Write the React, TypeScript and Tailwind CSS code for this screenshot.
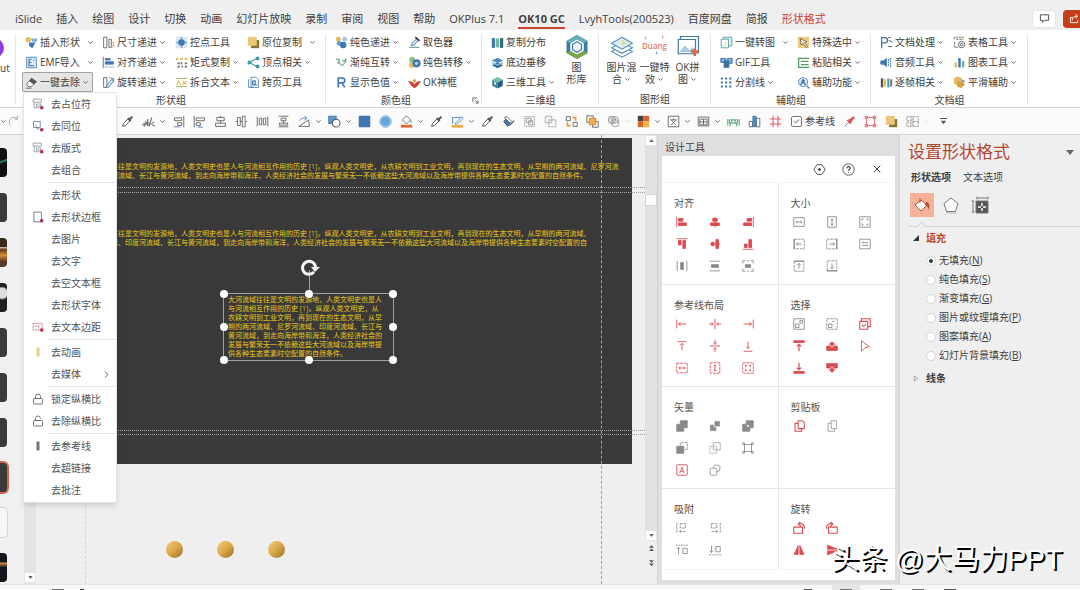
import { useState } from "react";
import type { ReactNode } from "react";
import clsx from "clsx";
import { Check, ChevronDown, ChevronRight, Lock, LockOpen, X } from "lucide-react";

const BLUE = "#3f78b0";
const TEAL = "#3f9aa8";
const GOLD = "#e3b95c";
const RED = "#dd4a4f";
const GRAY = "#8a8a8a";
const INK = "#555555";

const glyphs: Record<string, ReactNode> = {
  // ribbon
  insertShape: (
    <g stroke="none">
      <circle cx="4" cy="4.500" r="3.200" fill={GOLD} />
      <path d="M7 3h8v4H9z" fill="#7fb2d6" />
      <path d="M5 8h8l-4 7-4-3z" fill={BLUE} />
    </g>
  ),
  emf: (
    <g stroke={BLUE}>
      <path d="M2 1.500h12v13H2z" fill="#dcebf6" />
      <path d="M5 4v8h6M5 4h3M5 8h3" strokeWidth="1.500" />
      <path d="M10 6l2-2" />
    </g>
  ),
  eraser: (
    <g stroke="#555">
      <path d="M2 10l6-7 6 4-6 6H4z" fill="#fff" />
      <path d="M5.500 6L8 3l6 4-3 3z" fill="#555" />
      <path d="M1 15h7" />
    </g>
  ),
  sizeStep: (
    <g stroke={INK}>
      <path d="M2 1.500h4v13H2zM8.500 4h3v10h-3z" fill="#fff" />
      <path d="M14 7v7" stroke="#d98f3c" strokeWidth="2" strokeDasharray="2 1" />
    </g>
  ),
  alignStep: (
    <g stroke={BLUE}>
      <path d="M1.500 1v14" stroke={INK} />
      <path d="M4 3h6v2H4zM4 7h10v3H4z" fill={BLUE} />
      <path d="M3 13.500h12" stroke="#9ab" />
    </g>
  ),
  rotateStep: (
    <g stroke={INK}>
      <path d="M2 2h4v12H2z" />
      <path d="M5 13L12 4l2.500 2L8 14z" fill="#cfe3f2" stroke={BLUE} />
      <path d="M9 2.500h5v4" stroke={BLUE} />
    </g>
  ),
  control: (
    <g stroke="none">
      <path d="M1 1h14v14H1z" fill="#d6e6f2" />
      <circle cx="8" cy="8" r="4" fill={BLUE} />
      <path d="M7 1h2v14H7zM1 7h14v2H1z" fill={BLUE} opacity=".5" />
    </g>
  ),
  matrix: (
    <g stroke="none">
      <path d="M1 2h3v3H1zM6.500 2h3v3h-3zM12 2h3v3h-3z" fill={GOLD} />
      <path d="M3 8h3v2H3zM7 7.500h2v3H7zM3 12h3v2H3zM8 12h2v2H8zM12 8h3v2h-3zM12 12h3v2h-3z" fill="#777" />
    </g>
  ),
  splitText: (
    <g>
      <path d="M1 3h14M1 13h14" stroke="#8aa84c" />
      <path d="M2 11l2.500-5L7 11M9 6l5 5M14 6l-5 5" stroke={GOLD} strokeWidth="1.300" />
    </g>
  ),
  copyPlace: (
    <g stroke="none">
      <path d="M5 5h10v10H5z" fill="#8a7433" />
      <path d="M1 1h11v11H1z" fill="#ecc878" />
    </g>
  ),
  vertex: (
    <g stroke={TEAL} strokeWidth="1.300">
      <path d="M3 8l9-5M3 8l9 5" />
      <circle cx="3" cy="8" r="1.800" fill={TEAL} />
      <circle cx="13" cy="3" r="1.800" fill={TEAL} />
      <circle cx="13" cy="13" r="1.800" fill={BLUE} />
    </g>
  ),
  crossPage: (
    <g stroke={BLUE}>
      <path d="M2 4v10h6M5 1.500h6l3 3V14H5z" fill="#fff" />
      <path d="M7 6v5h5M7 6h3v5" strokeWidth="1.500" />
    </g>
  ),
  solidStep: (
    <g stroke="none">
      <circle cx="4" cy="4" r="3" fill={GOLD} />
      <circle cx="12" cy="4" r="3" fill="#a8c8e4" />
      <circle cx="5" cy="9" r="3" fill="#6a9fcb" />
      <circle cx="10" cy="11" r="4" fill={BLUE} />
    </g>
  ),
  gradSwap: (
    <g stroke="#4e9a6b" strokeWidth="1.500">
      <path d="M1 4h4v4l-2 1M9 6h4V3" />
      <path d="M5 9l4 3 5-6" stroke="#7fb5a0" />
    </g>
  ),
  letterR: <path d="M4 14V2.500h5a3 3 0 010 6H4M8.500 8.500L12 14" stroke={BLUE} strokeWidth="2" />,
  picker: (
    <g>
      <path d="M4 12l1-3 6-6 2.500 2-6 6z" stroke={BLUE} fill="#cfe0ef" />
      <path d="M9 1.500l5 4.500" stroke="#333" strokeWidth="2" />
      <path d="M1 14h13" stroke="#7a9" strokeWidth="1.500" />
    </g>
  ),
  solidMove: (
    <g stroke="none">
      <circle cx="5" cy="4.500" r="3.500" fill="#8fbf7c" />
      <circle cx="5" cy="11" r="3.500" fill={GOLD} />
      <circle cx="10.500" cy="9" r="5" fill={BLUE} />
      <circle cx="10.500" cy="9" r="2" fill="#bcd7ec" />
    </g>
  ),
  okFrame: (
    <g stroke="none">
      <path d="M0 6l5 1 3 3 3-3 5-1-4 6-4 3-4-3z" fill="#cf4232" />
      <path d="M8 3l2 3-2 3-2-3z" fill="#e08a3c" />
    </g>
  ),
  distribute: (
    <g stroke="none">
      <path d="M1 2l4 1v11l-4 1z" fill={BLUE} />
      <path d="M6 3h4v11H6z" fill="#76b7a2" />
      <path d="M11 3l4-1v13l-4-1z" fill="#2f6d7c" />
    </g>
  ),
  stack: (
    <g stroke="none">
      <path d="M8 8l7 3.500L8 15l-7-3.500z" fill="#2f6797" />
      <path d="M8 2l7 3.500L8 9 1 5.500z" fill="#4c8bbb" />
      <path d="M1 7l7 3 7-3v2l-7 3-7-3z" fill="#8cb6d5" />
    </g>
  ),
  cube: (
    <g stroke="none">
      <path d="M8 1l6.500 3.500L8 8 1.500 4.500z" fill="#7cc0b4" />
      <path d="M1.500 4.500L8 8v7.500L1.500 12z" fill="#3a7f97" />
      <path d="M14.500 4.500L8 8v7.500l6.500-3.500z" fill="#275a7c" />
      <path d="M4 7l2 1v3l-2-1z" fill="#fff" />
    </g>
  ),
  toPicture: (
    <g stroke={TEAL}>
      <path d="M4 1.500h10.500V12H4z" fill="#e4f1f4" />
      <path d="M1.500 4h9v10.500h-9z" fill="#fff" />
      <path d="M4 13l5-6" stroke={GOLD} />
    </g>
  ),
  gif: (
    <g stroke={BLUE} strokeWidth="1.200">
      <path d="M1 3h6v5H1zM9 3h6v6H9z" fill="#7fb0d6" />
      <path d="M5 6h6v8H5z" fill="#3d6f8f" />
    </g>
  ),
  dotGrid: (
    <g stroke={BLUE} strokeWidth="2.400" strokeDasharray="2.600 2.600">
      <path d="M1 3h14M1 8h14M1 13h14" />
    </g>
  ),
  special: (
    <g>
      <path d="M1 1h14v14H1z" fill="#eccb83" stroke="none" />
      <path d="M4 3l8 4-3 1 4 5-2 1-3.500-5L5 11z" fill="#fff" stroke="#6b5527" />
    </g>
  ),
  paste: (
    <g stroke="#4f9a63" strokeWidth="1.500">
      <path d="M1 3h14M1 14h14M5 6.500h9M5 10.500h9M2 3v11" />
    </g>
  ),
  assist: (
    <g stroke={BLUE}>
      <circle cx="7.500" cy="7.500" r="5.500" fill="#e2eff8" />
      <circle cx="7.500" cy="6" r="1.600" fill={BLUE} />
      <path d="M5 11c0-4 5-4 5 0M12 12l3 3" strokeWidth="1.600" />
    </g>
  ),
  docProc: (
    <g stroke={BLUE} strokeWidth="1.600">
      <path d="M2 15V2h4a3 3 0 010 6.500H2" />
      <path d="M10 2h3M11 5l4 3M10 13h5" stroke="#555" strokeWidth="1.200" />
    </g>
  ),
  audio: (
    <g stroke={BLUE}>
      <path d="M1 6h3l4-3v10l-4-3H1z" fill={BLUE} />
      <path d="M10.500 4v8M13 2.500v11" strokeDasharray="2 1" strokeWidth="1.400" />
    </g>
  ),
  frames: (
    <g stroke="none">
      <path d="M1 3h3v11H1z" fill="#555" />
      <path d="M5 4h2.500v9H5z" fill={GOLD} />
      <path d="M9 3h2.500v11H9z" fill={TEAL} />
      <path d="M12.500 4H15v9h-2.500z" fill="#777" />
    </g>
  ),
  tableTool: (
    <g stroke={INK}>
      <path d="M1.500 4V1.500h11V5M2 7v7h4M4 4h8" strokeDasharray="3 1" />
      <circle cx="10.500" cy="10.500" r="4" fill="#eef2f5" />
      <circle cx="10.500" cy="10.500" r="1.400" />
    </g>
  ),
  chartTool: (
    <g stroke="none">
      <path d="M2 8h3v6H2z" fill={GOLD} />
      <path d="M6.500 2.500h3V14h-3z" fill={BLUE} />
      <path d="M11 6h3v8h-3z" fill="#67b1c5" />
    </g>
  ),
  smooth: (
    <g stroke="none">
      <circle cx="6" cy="6" r="5" fill={GOLD} />
      <path d="M5 7h6l4 3-5 5-5-2z" fill="#d9a33b" />
      <path d="M9 3l6 3-3 3z" fill="#8a9bb0" />
    </g>
  ),
  hexLogo: (
    <g stroke="none">
      <path d="M8 0l7 4v8l-7 4-7-4V4z" fill="#3a7aa8" />
      <path d="M8 0l7 4-2.500 1.500L8 3 3.500 5.500 1 4z" fill="#68aeb9" />
      <path d="M1 12l2.500-1.500L8 13l4.500-2.500L15 12l-7 4z" fill="#7ba845" />
      <path d="M8 3l4.500 2.500v5L8 13l-4.500-2.500v-5z" fill="#fff" />
      <path d="M8 4.500l3 1.700v3.600l-3 1.700-3-1.700V6.200z" stroke={BLUE} strokeWidth=".8" fill="#eaf4f8" />
    </g>
  ),
  layers: (
    <g stroke="#4c8fb4" strokeWidth=".7">
      <path d="M8 7.500l7 3.500-7 3.800L1 11z" fill="#fff" />
      <path d="M8 5l7 3.500-7 3.700-7-3.700z" fill="#fff" />
      <path d="M8 1.500L15 5.500 8 9.500 1 5.500z" fill="#dcebf0" />
      <path d="M8 3v4l3-1.500z" fill="#d9dd9a" stroke="none" />
    </g>
  ),
  puzzle: (
    <g stroke="#4179a3" strokeWidth=".8">
      <path d="M3 3V1h12v11h-2M1.500 3h11.500v9.500H1.500z" fill="#fff" />
      <path d="M2 11.500l4-4.500 3 3 2-2 2 3.500z" fill="#a9cbe2" stroke="none" />
      <path d="M10 11h5M12.500 9v5" stroke="#dd6544" strokeWidth="1.700" />
    </g>
  ),
  // quick access
  redo: <path d="M13 5A5.500 5.500 0 104 12.500M13 1v4H9" stroke="#999" />,
  dropper: (
    <g stroke={INK} strokeWidth="1.200">
      <path d="M2 14l1-3.500 6-6 2.500 2.500-6 6z" />
      <path d="M8.500 4l3.500 3.500M10.500 5.500L14 2" strokeWidth="2.600" />
    </g>
  ),
  scribble: (
    <path
      d="M1 13c0-3 3-4 3-1s-3 2-1 0 3-3 2-4 1 5 2 5M7 13V5M7 10c3-2 3 3 0 3M15 9c-3-1-4 4-1 4h2M12 3l-3 11"
      stroke={INK}
      strokeWidth="1.200"
    />
  ),
  alignRight: (
    <g stroke={INK}>
      <path d="M14.500 1v14M3 3.500h9v3.500H3zM7 9.500h5V13H7z" />
      <path d="M2 14.500h8" stroke={BLUE} />
    </g>
  ),
  alignLeft: (
    <g stroke={INK}>
      <path d="M1.500 1v14M4 3.500h10V7H4zM4 9.500h5V13H4z" />
      <path d="M6 15h6" stroke={BLUE} />
    </g>
  ),
  alignMid: <path d="M8 1v2M8 7v3M8 14v1M3.500 3h9v4h-9zM2 10h12v4H2z" stroke={INK} />,
  alignCross: <path d="M1 8h2M6.500 8H9M13 8h2M3 3h3.500v10H3zM9 1.500h3.500v13H9z" stroke={INK} />,
  spreadH: <path d="M1.500 2v12M14.500 2v12M4 4h3v8H4zM9 4h3v8H9z" stroke={INK} />,
  spreadV: <path d="M2 1.500h12M2 14.500h12M5 4h6v3H5zM8 7v3M3 10h10v2.500H3z" stroke={INK} />,
  rotate: (
    <g>
      <path d="M1 14h13L13 6z" stroke={INK} />
      <path d="M2 7a6 4 0 018-3M8 1l3 3-3 2" stroke={BLUE} />
    </g>
  ),
  shapes: (
    <g stroke={BLUE} strokeWidth="1.300">
      <path d="M1 1.500h9v9H1z" fill="#5d9bd0" />
      <circle cx="10" cy="10" r="4.800" fill="#fff" stroke={INK} />
    </g>
  ),
  square: <path d="M1.500 1.500h13v13h-13z" fill="#4076b2" stroke="#2f5f97" />,
  disc: (
    <g stroke="#4a90cf">
      <circle cx="8" cy="8" r="7" fill="#e6f2fb" />
      <circle cx="8" cy="8" r="5" fill="#62a9dd" />
    </g>
  ),
  bucket: (
    <g>
      <path d="M3 6l5-5 5 5-5 5z" stroke={INK} fill="#fff" />
      <path d="M13 6c1 2 1 3 0 4" stroke={BLUE} />
      <path d="M1 12h14v3.500H1z" fill="#dd6a35" stroke="none" />
    </g>
  ),
  lineColor: (
    <g>
      <path d="M12 3H2v8M5 11l8-9 2 2-8 8z" stroke={BLUE} />
      <path d="M1 12.500h14v3H1z" fill="#e9a43c" stroke="none" />
    </g>
  ),
  brush: (
    <g stroke={INK}>
      <path d="M3 3l3-1 6 6-3 3z" fill="#fff" />
      <path d="M2 8l3-3 5 5-3 4z" fill={BLUE} />
      <path d="M9 13l6-6" strokeWidth="1.500" />
    </g>
  ),
  group: (
    <g stroke={GRAY}>
      <path d="M2 2h12v12H2z" strokeDasharray="2 1" />
      <path d="M4 4h6v5H4zM7 7h5v5H7z" />
    </g>
  ),
  ungroup: <path d="M1.500 1.500h8v8h-8zM6 6h8.500v8.500H6z" stroke={GRAY} strokeDasharray="3 1" />,
  swap: (
    <g stroke={INK}>
      <path d="M1.500 2h5v5h-5zM10 9h5v5h-5z" />
      <path d="M9 3h4v4M7 13H3V9" stroke="#e09a3a" strokeWidth="2" />
    </g>
  ),
  bringFront: (
    <g stroke={INK}>
      <path d="M1 1h8v8H1zM8 8h7v7H8z" />
      <path d="M4 4h8v8H4z" fill="#f0ad4e" stroke="#c98425" />
    </g>
  ),
  merge: (
    <g stroke={GRAY}>
      <circle cx="6" cy="6" r="4.500" fill="#ddd" />
      <circle cx="10" cy="10" r="4.500" />
      <circle cx="10" cy="6" r="4" />
    </g>
  ),
  palette: (
    <g stroke="none">
      <path d="M1 1h7v7H1z" fill="#444" />
      <path d="M8 1h7v7H8z" fill="#d9642b" />
      <path d="M1 8h7v7H1z" fill="#d9642b" />
      <path d="M8 8h7v7H8z" fill="#eeb248" />
    </g>
  ),
  textBox: (
    <g stroke={INK}>
      <path d="M1.500 1.500h13v13h-13z" />
      <path d="M4 6h8M8 4v2M5.500 6.500L11 12.500M10.500 6.500L5 12.500" />
    </g>
  ),
  tableBox: <path d="M1.500 2.500h13v11h-13zM3.500 5h9M3.500 5v7h9V5M8 5v7M3.500 8.500h9" stroke={INK} />,
  ruler: <path d="M1 5v8M15 5v8M3 6h10v4H3zM6 6v4M10 6v4M4 10v4M12 10v4" stroke="#4a9e72" strokeWidth="1.200" />,
  columns: (
    <g stroke={INK}>
      <path d="M1.500 8h4v6.500h-4zM10.500 4h4v10.500h-4z" fill="#fff" />
      <path d="M6 1.500h4v13H6z" fill="#4b96b8" stroke={BLUE} />
    </g>
  ),
  hash: <path d="M5 1v14M11 1v14M1 5h14M1 11h14" stroke="#d9606a" strokeWidth="1.300" />,
  pin: (
    <g stroke="#d8555c">
      <path d="M2 14l5-5" stroke={BLUE} />
      <path d="M5 7l4 4 2-4 3-4-1-1-4 3z" fill="#d8555c" />
    </g>
  ),
  bounds: (
    <g stroke="#d8555c">
      <path d="M3 3h10v10H3z" />
      <path d="M1.500 1.500h3v3h-3zM11.500 1.500h3v3h-3zM1.500 11.500h3v3h-3zM11.500 11.500h3v3h-3z" fill="#f5c6c8" />
    </g>
  ),
  mirror: <path d="M1 2h5v5H1zM1 9h5v5H1zM9 2h6v12H9zM9 8h6M7.500 1v14" stroke={GRAY} strokeDasharray="3 1" />,
  // menu
  rmHolder: (
    <g stroke={GRAY}>
      <path d="M1.500 1.500h11v4h-11zM3 5.500V13h7M6 8h6v3H6z" />
      <path d="M11 11h4v4h-4z" fill="#a8243c" stroke="none" />
    </g>
  ),
  rmSame: (
    <g stroke="#5c6c93">
      <path d="M2 2h9v8H2zM5 7l2 5h3" />
      <path d="M11 11h4v4h-4z" fill="#a8243c" stroke="none" />
    </g>
  ),
  rmBorder: (
    <g stroke={INK}>
      <path d="M2.500 1.500h10v13h-10z" />
      <path d="M11 11h4v4h-4z" fill="#a8243c" stroke="none" />
    </g>
  ),
  rmMargin: (
    <g stroke="#b2606b">
      <path d="M1.500 3h12v9h-12z" strokeDasharray="3 1" />
      <path d="M4 7h3M9 5v4" />
      <path d="M11 10h4v4h-4z" fill="#a8243c" stroke="none" />
    </g>
  ),
  barGold: <path d="M6 2h4v12H6z" fill="#e6cf86" stroke="none" />,
  barGray: <path d="M6 2h4v12H6z" fill="#777" stroke="none" />,
  // align
  aLeft: <path d="M2 2v12M4 4h5v3H4zM4 9h9v3H4z" stroke={RED} fill={RED} />,
  aCenter: <path d="M8 2v12M5.500 4h5v3h-5zM3 9h10v3H3z" stroke={RED} fill={RED} />,
  aRight: <path d="M14 2v12M7 4h5v3H7zM3 9h9v3H3z" stroke={RED} fill={RED} />,
  aTop: <path d="M2 2h12M4 4h3v5H4zM9 4h3v9H9z" stroke={RED} fill={RED} />,
  aMiddle: <path d="M2 8h12M4 6h3v4H4zM9 3h3v10H9z" stroke={RED} fill={RED} />,
  aBottom: <path d="M2 14h12M4 8h3v4H4zM9 3h3v9H9z" stroke={RED} fill={RED} />,
  dH: (
    <g stroke={GRAY}>
      <path d="M2.500 2v12M13.500 2v12" />
      <path d="M6.500 4h3v8h-3z" fill={GRAY} />
    </g>
  ),
  dV: (
    <g stroke={GRAY}>
      <path d="M2 2.500h12M2 13.500h12" />
      <path d="M4 6.500h8v3H4z" fill={GRAY} />
    </g>
  ),
  dBoth: (
    <g stroke={GRAY}>
      <path d="M2 5V2h3M11 2h3v3M14 11v3h-3M5 14H2v-3M7 2h2M7 14h2" />
      <path d="M5 6.500h6v3H5z" fill={GRAY} />
    </g>
  ),
  // size
  sW: <path d="M2 3h12v10H2zM4.500 8h7M6 6.500L4.500 8 6 9.500M10 6.500L11.500 8 10 9.500" stroke={GRAY} />,
  sH: <path d="M3 2h10v12H3zM8 4.500v7M6.500 6L8 4.500 9.500 6M6.500 10L8 11.500 9.500 10" stroke={GRAY} />,
  sBoth: <path d="M2 2h12v12H2zM4.500 6.500v-2h2M9.500 4.500h2v2M11.500 9.500v2h-2M6.500 11.500h-2v-2" stroke={GRAY} />,
  sLeft: (
    <g stroke={GRAY}>
      <path d="M3 2.500h11v11H3" strokeDasharray="3 1" />
      <path d="M2.500 2v12" strokeWidth="1.600" />
      <path d="M5 8h6M7 6L5 8l2 2" />
    </g>
  ),
  sRight: (
    <g stroke={GRAY}>
      <path d="M13 2.500H2v11h11" strokeDasharray="3 1" />
      <path d="M13.500 2v12" strokeWidth="1.600" />
      <path d="M5 8h6M9 6l2 2-2 2" />
    </g>
  ),
  sSwap: <path d="M2 2.500h12v11H2zM4.500 6.500h7M6 5L4.500 6.500M4.500 9.500h7M10 11l1.500-1.500" stroke={GRAY} />,
  sTop: (
    <g stroke={GRAY}>
      <path d="M2.500 3v11h11V3" strokeDasharray="3 1" />
      <path d="M2 2.500h12" strokeWidth="1.600" />
      <path d="M8 5v6M6 7l2-2 2 2" />
    </g>
  ),
  sBottom: (
    <g stroke={GRAY}>
      <path d="M2.500 13V2h11v11" strokeDasharray="3 1" />
      <path d="M2 13.500h12" strokeWidth="1.600" />
      <path d="M8 5v6M6 9l2 2 2-2" />
    </g>
  ),
  // guides
  gLeft: <path d="M2 3v10M4 8h9M6.500 6L4 8l2.500 2" stroke={RED} />,
  gCenter: <path d="M8 2v12M1 8h5M4 6l2 2-2 2M15 8h-5M12 6l-2 2 2 2" stroke={RED} />,
  gRight: <path d="M14 3v10M3 8h9M9.500 6L12 8l-2.500 2" stroke={RED} />,
  gTop: <path d="M3 3h10M8 5v8M6 7l2-2 2 2" stroke={RED} />,
  gMiddle: <path d="M2 8h12M8 1v5M6 4l2 2 2-2M8 15v-5M6 12l2-2 2 2" stroke={RED} />,
  gBottom: <path d="M3 14h10M8 3v8M6 9l2 2 2-2" stroke={RED} />,
  gBoxH: (
    <g stroke={RED}>
      <path d="M2 2.500h12v11H2z" strokeDasharray="3 1" />
      <path d="M4.500 8h7M6 6.500L4.500 8 6 9.500M10 6.500L11.500 8 10 9.500" />
    </g>
  ),
  gBoxV: (
    <g stroke={RED}>
      <path d="M2.500 2h11v12h-11z" strokeDasharray="3 1" />
      <path d="M8 4.500v7M6.500 6L8 4.500 9.500 6M6.500 10L8 11.500 9.500 10" />
    </g>
  ),
  gBox: (
    <g stroke={RED}>
      <path d="M2 2h12v12H2z" strokeDasharray="3 1" />
      <path d="M5 7V5h2M9 5h2v2M11 9v2H9M7 11H5V9" />
    </g>
  ),
  // select
  pick1: <path d="M2 2h12v12H2zM4 8h4v4H4zM9 4h3v3H9z" stroke={GRAY} />,
  pick2: (
    <g stroke={GRAY}>
      <path d="M2 2h12v12H2z" strokeDasharray="3 1" />
      <path d="M4 8h4v4H4zM8 5h3" />
    </g>
  ),
  pick3: <path d="M2 5h9v9H2zM4 5V2h10v9h-3M4.500 9l2 2 3-3" stroke={RED} strokeWidth="1.200" />,
  toTop: (
    <g stroke={RED}>
      <path d="M2 2h12v2H2z" fill={RED} />
      <path d="M8 6v8M5.500 8.500L8 6l2.500 2.500" strokeWidth="1.400" />
    </g>
  ),
  upOne: <path d="M2 8h4v2h4V8h4v5H2zM8 3L5 6h2v2h2V6h2z" stroke={RED} fill={RED} />,
  cursor: <path d="M4 2l9 7-5 1-4 4z" stroke={RED} />,
  toBottom: (
    <g stroke={RED}>
      <path d="M2 12h12v2H2z" fill={RED} />
      <path d="M8 2v8M5.500 7.500L8 10l2.500-2.500" strokeWidth="1.400" />
    </g>
  ),
  downOne: <path d="M2 3h12v5h-4V6H6v2H2zM8 13l-3-3h2V8h2v2h2z" stroke={RED} fill={RED} />,
  // vector
  vUnion: <path d="M6 2h8v8h-4v4H2V6h4z" fill={GRAY} stroke={GRAY} />,
  vCombine: (
    <g stroke="#fff">
      <path d="M2 6h8v8H2z" fill={GRAY} />
      <path d="M7 2h7v7H7z" fill={GRAY} />
    </g>
  ),
  vSplit: (
    <g stroke={GRAY}>
      <path d="M6 2h8v8h-4v4H2V6h4z" fill={GRAY} />
      <path d="M6.500 6.500h3v3h-3z" fill="#fff" />
    </g>
  ),
  vSub: (
    <g stroke={GRAY}>
      <path d="M6 5V2h8v8h-3" strokeDasharray="3 1" />
      <path d="M2 6h8v8H2z" fill={GRAY} />
    </g>
  ),
  vCross: (
    <g stroke="#aaa">
      <path d="M6 2h8v8H6z" />
      <path d="M2 6h8v8H2z" strokeDasharray="3 1" />
    </g>
  ),
  vNodes: <path d="M4 4h8v8H4zM2 2h2v2H2zM12 2h2v2h-2zM2 12h2v2H2zM12 12h2v2h-2z" stroke={GRAY} />,
  vLetter: (
    <g stroke={RED}>
      <rect x="2" y="2" width="12" height="12" rx="1" />
      <path d="M5.500 11.500L8 5l2.500 6.500M6.500 9.500h3" />
    </g>
  ),
  vShape: (
    <g stroke="#999">
      <path d="M6 6V4l3-2 5 2-1 5-3 1" />
      <rect x="2.500" y="6" width="7.500" height="8" rx="1" />
    </g>
  ),
  clip: <path d="M7 2h5l2 2v7H7zM7 5H3.500v9H11v-3" stroke={RED} strokeWidth="1.200" />,
  clipGray: <path d="M7 2h6v9H7zM7 5H3.500v9H11v-3" stroke="#999" />,
  // snap
  snapL: <path d="M2 2v12M6 3h6v5H6zM5 12h7M7 10.500L5 12l2 1.500" stroke={GRAY} strokeDasharray="3 1" />,
  snapR: <path d="M14 2v12M4 3h6v5H4zM4 12h7M9 10.500l2 1.500-2 1.500" stroke={GRAY} strokeDasharray="3 1" />,
  snapT: (
    <g stroke={GRAY}>
      <path d="M1 2.500h14" strokeDasharray="2 1" />
      <path d="M4 5v8M2 7l2-2 2 2M9 6h5v6H9z" />
    </g>
  ),
  snapB: (
    <g stroke={GRAY}>
      <path d="M1 13.500h14" strokeDasharray="2 1" />
      <path d="M4 3v8M2 9l2 2 2-2M9 4h5v6H9z" />
    </g>
  ),
  rotR: <path d="M2 7h10v7H2zM7 3.500c4-1.500 8 1 7 5.500M9.500 1L7 3.500 10 6" stroke={RED} strokeWidth="1.200" />,
  rotL: <path d="M4 7h10v7H4zM2 9C1 4 5 2 9 3.500M6.500 1L9 3.500 6 6" stroke={RED} strokeWidth="1.200" />,
  flipH: <path d="M7 3v10H2.500zM9 3v10h4.500z" stroke={RED} fill={RED} />,
  flipV: <path d="M3 7h11L3 2.500zM3 9h11L3 13.500z" stroke={RED} fill={RED} />,
  // header
  hexagon: (
    <g stroke="#333">
      <path d="M5 2h6l4 6-4 6H5L1 8z" />
      <circle cx="8" cy="8" r="1.200" fill="#333" />
    </g>
  ),
  help: (
    <g stroke="#333">
      <circle cx="8" cy="8" r="7" />
      <path d="M6 6.500c0-3 4.200-2.500 4.200 0C10.200 8 8 8 8 9.500M8 11v1" strokeWidth="1.300" />
    </g>
  ),
};

function Icon({ name, className = "size-[13px]" }: { name: string; className?: string }) {
  return (
    <svg viewBox="0 0 16 16" fill="none" stroke="currentColor" aria-hidden="true" className={clsx("shrink-0", className)}>
      {glyphs[name]}
    </svg>
  );
}

function Chevron({ faded = false }: { faded?: boolean }) {
  return <ChevronDown strokeWidth={3} className={clsx("size-[7px] shrink-0", faded ? "text-neutral-300" : "text-neutral-600")} />;
}

interface Command {
  icon: string;
  label: string;
  menu?: "near" | "far";
}

function CommandButton({ icon, label, menu, open = false, onClick }: Command & { open?: boolean; onClick?: () => void }) {
  return (
    <button
      type="button"
      onClick={onClick}
      className={clsx(
        "flex h-5 items-center gap-[2px] whitespace-nowrap pl-[3px]",
        open && "rounded-xs bg-neutral-200 pr-1 ring-1 ring-inset ring-neutral-400",
      )}
    >
      <Icon name={icon} />
      <span>{label}</span>
      {menu && (
        <span className={menu === "far" ? "pl-[5px]" : ""}>
          <Chevron />
        </span>
      )}
    </button>
  );
}

function Group({ title, className, launcher, children }: { title: string; className: string; launcher?: boolean; children: ReactNode }) {
  return (
    <section className={clsx("relative flex shrink-0 flex-col pt-[2px]", className)}>
      <div className="flex h-[60px] pl-[6px]">{children}</div>
      <h2 className={clsx("text-center leading-4", launcher && "pr-4")}>{title}</h2>
      {launcher && (
        <svg viewBox="0 0 8 8" fill="none" stroke="#666" className="absolute bottom-[3px] right-[3px] size-[7px]">
          <path d="M1 6V1h5M3 3l4 4M7 4v3H4" />
        </svg>
      )}
      <span className="absolute bottom-[3px] right-0 top-1 w-px bg-neutral-200" />
    </section>
  );
}

function CommandColumn({ items, className }: { items: Command[]; className: string }) {
  return (
    <div className={clsx("flex flex-col items-start", className)}>
      {items.map((c) => (
        <CommandButton key={c.label} {...c} />
      ))}
    </div>
  );
}

function BigButton({ lines, menu, children }: { lines: [string, string]; menu?: boolean; children: ReactNode }) {
  return (
    <button type="button" className="flex w-[33px] flex-col items-center pt-[3px] leading-3">
      <span className="flex h-[26px] items-start">{children}</span>
      <span className="whitespace-nowrap">{lines[0]}</span>
      <span className="flex items-center gap-[2px]">
        {lines[1]}
        {menu && <Chevron />}
      </span>
    </button>
  );
}

const tabs = [
  "iSlide", "插入", "绘图", "设计", "切换", "动画", "幻灯片放映", "录制", "审阅", "视图", "帮助",
  "OKPlus 7.1", "OK10 GC", "LvyhTools(200523)", "百度网盘", "简报", "形状格式",
];

function TabBar() {
  return (
    <header className="flex h-[30px] shrink-0 items-center bg-[#efefef] text-[11px]">
      <nav className="flex flex-1 items-center gap-[14px] whitespace-nowrap pl-[15px] pt-2">
        {tabs.map((t) => (
          <button
            key={t}
            type="button"
            className={clsx(
              "border-b-2 leading-[17px]",
              t === "OK10 GC" ? "border-[#c8452f] font-bold" : "border-transparent",
              t === "形状格式" && "text-[#c8452f]",
            )}
          >
            {t}
          </button>
        ))}
      </nav>
      <div className="flex gap-[7px] pt-[7px]">
        <button type="button" aria-label="批注" className="flex h-[18px] w-6 items-center justify-center rounded-sm border border-neutral-200 bg-white">
          <svg viewBox="0 0 12 12" fill="none" stroke="#444" className="size-[11px]">
            <path d="M1.500 2h9v6H6l-2 2V8H1.500z" />
          </svg>
        </button>
        <button type="button" aria-label="共享" className="flex h-[18px] w-[17px] items-center justify-end rounded-l bg-[#c43e1c]">
          <svg viewBox="0 0 12 12" fill="none" stroke="#fff" className="size-[11px]">
            <path d="M4 5H1.500v5.500h8V8M3.500 8c0-3 2-4.500 5-4.500M7 1.500l2.500 2L7 6" />
          </svg>
        </button>
      </div>
    </header>
  );
}

const removeMenu: { label: string; icon?: string; more?: boolean }[][] = [
  [{ label: "去占位符", icon: "rmHolder" }, { label: "去同位", icon: "rmSame" }, { label: "去版式", icon: "rmHolder" }, { label: "去组合" }],
  [
    { label: "去形状" },
    { label: "去形状边框", icon: "rmBorder" },
    { label: "去图片" },
    { label: "去文字" },
    { label: "去空文本框" },
    { label: "去形状字体" },
    { label: "去文本边距", icon: "rmMargin" },
  ],
  [{ label: "去动画", icon: "barGold" }, { label: "去媒体", more: true }],
  [{ label: "锁定纵横比", icon: "lock" }, { label: "去除纵横比", icon: "unlock" }],
  [{ label: "去参考线", icon: "barGray" }, { label: "去超链接" }, { label: "去批注" }],
];

function MenuIcon({ name }: { name?: string }) {
  if (!name) return null;
  if (name === "lock") return <Lock className="size-3 text-neutral-500" />;
  if (name === "unlock") return <LockOpen className="size-3 text-neutral-500" />;
  return <Icon name={name} className="size-3" />;
}

function RemoveMenu() {
  return (
    <div role="menu" className="absolute left-px top-full z-20 w-[94px] rounded-xs border border-neutral-200 bg-white pb-px shadow-md">
      {removeMenu.map((section, i) => (
        <div key={section[0].label}>
          {i > 0 && <div className="my-px ml-6 h-px bg-neutral-200" />}
          {section.map((item) => (
            <button key={item.label} type="button" role="menuitem" className="flex h-[22px] w-full items-center whitespace-nowrap pl-2 text-neutral-600">
              <span className="w-[19px]">
                <MenuIcon name={item.icon} />
              </span>
              <span className="flex-1 text-left">{item.label}</span>
              {item.more && <ChevronRight className="mr-1 size-[11px]" />}
            </button>
          ))}
        </div>
      ))}
    </div>
  );
}

function Ribbon() {
  const [isMenuOpen, setIsMenuOpen] = useState(true);

  return (
    <div className="flex h-[78px] shrink-0 border-b border-neutral-300 bg-white text-[10px]">
      <div className="relative w-4 shrink-0 overflow-hidden pt-2">
        <div className="-ml-4 size-5 rounded-full bg-[#8b3fe0]" />
        <div className="pt-[2px] leading-4">ut</div>
        <span className="absolute bottom-[3px] right-0 top-1 w-px bg-neutral-200" />
      </div>
      <Group title="形状组" className="w-[310px]">
        <div className="relative flex w-[77px] flex-col items-start">
          <CommandButton icon="insertShape" label="插入形状" menu="far" />
          <CommandButton icon="emf" label="EMF导入" menu="far" />
          <CommandButton icon="eraser" label="一键去除" menu="near" open onClick={() => setIsMenuOpen((o) => !o)} />
          {isMenuOpen && <RemoveMenu />}
        </div>
        <CommandColumn
          className="w-[73px]"
          items={[
            { icon: "sizeStep", label: "尺寸递进", menu: "near" },
            { icon: "alignStep", label: "对齐递进", menu: "near" },
            { icon: "rotateStep", label: "旋转递进", menu: "near" },
          ]}
        />
        <CommandColumn
          className="w-[72px]"
          items={[
            { icon: "control", label: "控点工具" },
            { icon: "matrix", label: "矩式复制", menu: "near" },
            { icon: "splitText", label: "拆合文本", menu: "near" },
          ]}
        />
        <CommandColumn
          className="w-[80px]"
          items={[
            { icon: "copyPlace", label: "原位复制", menu: "far" },
            { icon: "vertex", label: "顶点相关", menu: "near" },
            { icon: "crossPage", label: "跨页工具" },
          ]}
        />
      </Group>
      <Group title="颜色组" className="w-[156px]" launcher>
        <CommandColumn
          className="w-[73px]"
          items={[
            { icon: "solidStep", label: "纯色递进", menu: "near" },
            { icon: "gradSwap", label: "渐纯互转", menu: "near" },
            { icon: "letterR", label: "显示色值", menu: "near" },
          ]}
        />
        <CommandColumn
          className="w-[73px]"
          items={[
            { icon: "picker", label: "取色器" },
            { icon: "solidMove", label: "纯色转移", menu: "near" },
            { icon: "okFrame", label: "OK神框" },
          ]}
        />
      </Group>
      <Group title="三维组" className="w-[117px]">
        <CommandColumn
          className="w-[72px]"
          items={[
            { icon: "distribute", label: "复制分布" },
            { icon: "stack", label: "底边垂移" },
            { icon: "cube", label: "三维工具", menu: "near" },
          ]}
        />
        <BigButton lines={["图", "形库"]}>
          <Icon name="hexLogo" className="size-6" />
        </BigButton>
      </Group>
      <Group title="图形组" className="w-[112px]">
        <BigButton lines={["图片混", "合"]} menu>
          <Icon name="layers" className="size-6" />
        </BigButton>
        <BigButton lines={["一键特", "效"]} menu>
          <span className="relative pt-[5px] text-[8px] font-semibold text-[#e07a70]">
            Duang
            <svg viewBox="0 0 24 20" fill="#e9a08c" className="absolute inset-x-0 top-0 h-5 w-full">
              <path d="M3 1l1 2-1 2-1-2zM20 0l1 2-1 2-1-2z" />
              <path d="M14 16l1 2-1 2-1-2z" fill="#7fb0c8" />
            </svg>
          </span>
        </BigButton>
        <BigButton lines={["OK拼", "图"]} menu>
          <Icon name="puzzle" className="size-6" />
        </BigButton>
      </Group>
      <Group title="辅助组" className="w-[160px]">
        <CommandColumn
          className="w-[77px]"
          items={[
            { icon: "toPicture", label: "一键转图", menu: "far" },
            { icon: "gif", label: "GIF工具" },
            { icon: "dotGrid", label: "分割线", menu: "near" },
          ]}
        />
        <CommandColumn
          className="w-[73px]"
          items={[
            { icon: "special", label: "特殊选中", menu: "near" },
            { icon: "paste", label: "粘贴相关", menu: "near" },
            { icon: "assist", label: "辅助功能", menu: "near" },
          ]}
        />
      </Group>
      <Group title="文档组" className="w-[157px]">
        <CommandColumn
          className="w-[73px]"
          items={[
            { icon: "docProc", label: "文档处理", menu: "near" },
            { icon: "audio", label: "音频工具", menu: "near" },
            { icon: "frames", label: "逐帧相关", menu: "near" },
          ]}
        />
        <CommandColumn
          className="w-[73px]"
          items={[
            { icon: "tableTool", label: "表格工具", menu: "near" },
            { icon: "chartTool", label: "图表工具", menu: "near" },
            { icon: "smooth", label: "平滑辅助", menu: "near" },
          ]}
        />
      </Group>
    </div>
  );
}

// a trailing "+" marks a split button with its own menu
const quickTools = [
  "dropper", "scribble+", "alignRight", "alignLeft", "alignMid", "alignCross", "spreadH", "spreadV", "rotate+", "shapes+",
  "square", "disc", "bucket+", "dropper", "lineColor+", "dropper", "brush", "group", "ungroup", "swap", "bringFront",
  "merge+", "palette+", "textBox+", "tableBox+", "ruler", "columns", "hash",
];

function QuickTool({ tool }: { tool: string }) {
  const name = tool.replace("+", "");
  return (
    <button type="button" aria-label={name} className="flex items-center">
      <span className="flex w-[21px] justify-center">
        <Icon name={name} />
      </span>
      {tool.endsWith("+") && (
        <span className="flex w-[9px]">
          <Chevron faded={name === "merge" || name === "mirror"} />
        </span>
      )}
    </button>
  );
}

function QuickBar() {
  return (
    <div className="flex h-[27px] shrink-0 items-center border-b border-neutral-300 bg-[#fbfbfb] text-[10px]">
      <Chevron />
      <Icon name="redo" />
      <div className="flex flex-1 items-center pl-[97px]">
        {quickTools.map((t, i) => (
          <QuickTool key={`${t}-${i}`} tool={t} />
        ))}
        <label className="relative flex items-center gap-[3px] pl-[5px] pr-1">
          <input type="checkbox" defaultChecked className="peer size-[11px] appearance-none rounded-xs border border-neutral-500 bg-white" />
          <Check strokeWidth={3} className="pointer-events-none absolute left-[7px] hidden size-[7px] peer-checked:block" />
          参考线
        </label>
        {["pin", "bounds", "copyPlace", "mirror+"].map((t) => (
          <QuickTool key={t} tool={t} />
        ))}
        <svg viewBox="0 0 8 8" className="ml-2 size-[7px]" fill="#555">
          <path d="M0 0h8v1H0zM1 3h6L4 7z" />
        </svg>
      </div>
    </div>
  );
}

const thumbs = [
  "bg-[linear-gradient(160deg,#111_40%,#2e8b57_45%,#111_52%)]",
  "bg-[#3a3a3a]",
  "bg-[linear-gradient(#3a2a1a_30%,#c9c1b5_32%,#6b3a1e_40%,#d98a3a_60%,#5a3a2a_80%)]",
  "bg-[radial-gradient(circle_at_30%_35%,#ddd_25%,#222_35%)]",
  "bg-[#3a3a3a]",
  "bg-[#3a3a3a]",
  "bg-[#3a3a3a]",
  "bg-[#3a3a3a] ring-2 ring-[#d0644c]",
  "bg-[#f6f6f6] ring-1 ring-neutral-300",
  "bg-[linear-gradient(#15151c_30%,#c78a4a_35%,#15151c_50%)]",
];

function Thumbnails() {
  return (
    <aside className="flex w-[38px] shrink-0 bg-[#f0f0f0]">
      <div className="flex w-[24px] flex-col gap-4 pt-[13px]">
        {thumbs.map((t, i) => (
          <button key={i} type="button" aria-label={`幻灯片 ${i + 1}`} className={clsx("h-[29px] w-[7px] shrink-0 rounded-r-sm", t)} />
        ))}
      </div>
      <div className="flex w-3 flex-col justify-end bg-[#e4e4e4] pb-px">
        <ScrollArrow />
      </div>
    </aside>
  );
}

function ScrollArrow({ up = false }: { up?: boolean }) {
  return (
    <button type="button" aria-label={up ? "向上" : "向下"} className="flex h-[11px] w-full items-center justify-center border border-neutral-200 bg-white">
      <svg viewBox="0 0 6 4" className={clsx("h-[3px] w-[5px]", up && "rotate-180")} fill="#666">
        <path d="M0 0h6L3 4z" />
      </svg>
    </button>
  );
}

const wideText = [
  "大河流域往往是文明的发源地，人类文明史也是人与河流相互作用的历史 [1]。纵观人类文明史，从农耕文明到工业文明，再到现在的生态文明，从早期的两河流域、尼罗河流",
  "域、印度河流域、长江与黄河流域，到走向海岸带和海洋，人类经济社会的发展与繁荣无一不依赖这些大河流域以及海岸带提供各种生态要素时空配置的自然条件。",
];

const middleText = [
  "大河流域往往是文明的发源地，人类文明史也是人与河流相互作用的历史 [1]。纵观人类文明史，从农耕文明到工业文明，再到现在的生态文明，从早期的两河流域、",
  "尼罗河流域、印度河流域、长江与黄河流域，到走向海岸带和海洋，人类经济社会的发展与繁荣无一不依赖这些大河流域以及海岸带提供各种生态要素时空配置的自",
];

const boxText = [
  "大河流域往往是文明的发源地，人类文明史也是人",
  "与河流相互作用的历史 [1]。纵观人类文明史，从",
  "农耕文明到工业文明，再到现在的生态文明，从早",
  "期的两河流域、尼罗河流域、印度河流域、长江与",
  "黄河流域，到走向海岸带和海洋，人类经济社会的",
  "发展与繁荣无一不依赖这些大河流域以及海岸带提",
  "供各种生态要素时空配置的自然条件。",
];

function Lines({ lines, className }: { lines: string[]; className: string }) {
  return (
    <div className={clsx("absolute whitespace-nowrap text-[7px] font-medium leading-[9px] text-[#d6b41e]", className)}>
      {lines.map((l) => (
        <p key={l}>{l}</p>
      ))}
    </div>
  );
}

const handles = [
  "-left-1 -top-1", "left-1/2 -top-1 -ml-1", "-right-1 -top-1", "-left-1 top-1/2 -mt-1",
  "-right-1 top-1/2 -mt-1", "-left-1 -bottom-1", "left-1/2 -bottom-1 -ml-1", "-right-1 -bottom-1",
];

function Canvas() {
  return (
    <main className="relative min-w-0 flex-1 overflow-hidden bg-[#efefef]">
      <div className="absolute bottom-[120px] left-4 right-[13px] top-[3px] bg-[#393939]" />
      <Lines lines={wideText} className="left-[45px] top-[27px]" />
      <Lines lines={middleText} className="left-[45px] top-[94px]" />

      <div className="absolute inset-x-0 top-[52px] h-[6px] border-y border-dotted border-neutral-400" />
      <div className="absolute inset-x-0 top-[295px] h-[5px] border-y border-dotted border-neutral-400" />
      <div className="absolute inset-y-0 right-[43px] border-l border-dashed border-neutral-400" />
      <div className="absolute inset-y-0 left-[47px] border-l border-dashed border-neutral-300" />

      <div className="absolute left-[185px] top-[158px] h-[68px] w-[171px] border border-neutral-400">
        <Lines lines={boxText} className="left-1 top-px" />
        <span className="absolute -top-6 left-1/2 h-6 w-px bg-neutral-400" />
        <svg viewBox="0 0 20 18" fill="none" className="absolute -top-[35px] left-1/2 -ml-2 h-[18px] w-5">
          <path d="M13 13A6.500 6.500 0 1114.500 8" stroke="#f4f4f4" strokeWidth="3" />
          <path d="M10 8h9l-5 5z" fill="#f4f4f4" />
        </svg>
        {handles.map((h) => (
          <span key={h} className={clsx("absolute size-2 rounded-full bg-white", h)} />
        ))}
      </div>

      <div className="absolute left-32 top-[406px] flex gap-[34px]">
        {[0, 1, 2].map((n) => (
          <span key={n} className="size-[17px] rounded-full bg-linear-135 from-[#f2cf7c] via-[#dba748] to-[#96712a]" />
        ))}
      </div>
    </main>
  );
}

function CanvasScroll() {
  return (
    <div className="flex w-3 shrink-0 flex-col bg-[#e2e2e2]">
      <ScrollArrow up />
      <div className="mt-12 h-3 border border-neutral-300 bg-white" />
      <div className="flex-1" />
      <ScrollArrow />
      <div className="flex h-[43px] flex-col items-center gap-1 bg-[#efefef] pt-1">
        <svg viewBox="0 0 6 8" className="h-[7px] w-[5px]" fill="#555">
          <path d="M3 0l3 3H0zM3 4l3 3H0z" />
        </svg>
        <svg viewBox="0 0 6 8" className="mt-1 h-[7px] w-[5px]" fill="#555">
          <path d="M3 3l3-3H0zM3 7l3-3H0z" />
        </svg>
      </div>
    </div>
  );
}

const toolSections = [
  { title: "对齐", icons: ["aLeft", "aCenter", "aRight", "aTop", "aMiddle", "aBottom", "dH", "dV", "dBoth"] },
  { title: "大小", icons: ["sW", "sH", "sBoth", "sLeft", "sRight", "sSwap", "sTop", "sBottom"] },
  { title: "参考线布局", icons: ["gLeft", "gCenter", "gRight", "gTop", "gMiddle", "gBottom", "gBoxH", "gBoxV", "gBox"] },
  { title: "选择", icons: ["pick1", "pick2", "pick3", "toTop", "upOne", "cursor", "toBottom", "downOne"] },
  { title: "矢量", icons: ["vUnion", "vCombine", "vSplit", "vSub", "vCross", "vNodes", "vLetter", "vShape"] },
  { title: "剪贴板", icons: ["clip", "clipGray"] },
  { title: "吸附", icons: ["snapL", "snapR", "", "snapT", "snapB"] },
  { title: "旋转", icons: ["rotR", "rotL", "", "flipH", "flipV"] },
];

function DesignTools() {
  return (
    <aside className="flex w-[243px] shrink-0 flex-col border-x border-neutral-300 bg-[#dfdfdf] px-1 pb-1 text-[10px] text-neutral-600">
      <h2 className="px-[3px] pt-1 leading-[17px] text-neutral-700">设计工具</h2>
      <div className="flex-1 bg-white">
        <div className="flex h-[27px] items-center justify-end gap-4 border-b border-neutral-100 pr-3">
          <button type="button" aria-label="设置">
            <Icon name="hexagon" className="size-[13px]" />
          </button>
          <button type="button" aria-label="帮助">
            <Icon name="help" className="size-[13px]" />
          </button>
          <button type="button" aria-label="关闭">
            <X className="size-3 text-neutral-700" />
          </button>
        </div>
        <div className="grid grid-cols-2 border-b border-neutral-100">
          {toolSections.map((s, i) => (
            <section
              key={s.title}
              className={clsx(
                "border-neutral-200 pl-3 pt-3",
                i % 2 === 0 && "border-r",
                i < 6 ? "h-[102px] border-b" : "h-20",
              )}
            >
              <h3 className="pb-[3px] leading-4">{s.title}</h3>
              <div className="grid grid-cols-[16px_16px_16px] gap-x-[17px] gap-y-[6px]">
                {s.icons.map((name, n) =>
                  name ? (
                    <button key={name} type="button" aria-label={`${s.title} ${n + 1}`} className="flex size-4 items-center justify-center">
                      <Icon name={name} className="size-[14px]" />
                    </button>
                  ) : (
                    <span key="gap" />
                  ),
                )}
              </div>
            </section>
          ))}
        </div>
      </div>
    </aside>
  );
}

const fills = [
  ["无填充", "N"],
  ["纯色填充", "S"],
  ["渐变填充", "G"],
  ["图片或纹理填充", "P"],
  ["图案填充", "A"],
  ["幻灯片背景填充", "B"],
];

function FormatPanel() {
  const [fill, setFill] = useState("N");

  return (
    <aside className="w-[180px] shrink-0 bg-[#efefef] pl-2 text-[10px] text-neutral-700">
      <div className="flex items-center justify-between pr-[6px] pt-[5px]">
        <h2 className="text-[17px] leading-6 text-[#b5472f]">设置形状格式</h2>
        <svg viewBox="0 0 8 5" className="h-[5px] w-2" fill="#666">
          <path d="M0 0h8L4 5z" />
        </svg>
      </div>
      <div className="flex gap-3 pl-[3px] pt-1 leading-[18px]">
        <button type="button" className="font-bold">形状选项</button>
        <button type="button">文本选项</button>
      </div>
      <div className="flex gap-[5px] pl-[2px] pt-[7px]">
        <button type="button" aria-label="填充与线条" className="flex size-6 items-center justify-center bg-[#f6b298]">
          <svg viewBox="0 0 18 18" fill="none" className="size-[18px]">
            <path d="M2 9l6-5 6 5-6 6z" fill="#fff" stroke="#a0583e" />
            <path d="M7 7V2" stroke="#b4502e" />
            <path d="M13 6c3 0 4 3 3 8-1-3-2-4-4-5z" fill="#b4502e" />
          </svg>
        </button>
        <button type="button" aria-label="效果" className="flex size-6 items-center justify-center">
          <svg viewBox="0 0 18 18" fill="#fff" stroke="#777" className="size-[18px]">
            <path d="M9 2l7 5.500-2.500 8h-9L2 7.500z" />
            <path d="M4 17h10" stroke="#bbb" />
          </svg>
        </button>
        <button type="button" aria-label="大小与属性" className="flex size-6 items-center justify-center">
          <svg viewBox="0 0 18 18" fill="none" stroke="#777" className="size-[18px]">
            <path d="M2 5v11M.500 5h3M.500 16h3M6 2h11M6 .500v3M17 .500v3" />
            <path d="M5 5h12v12H5z" fill="#555" />
            <path d="M11 7v3M11 12v3M7 11h3M12 11h3" stroke="#fff" strokeWidth="1.500" />
          </svg>
        </button>
      </div>
      <div className="relative mt-[9px] border-t border-neutral-300">
        <span className="absolute -top-[4px] left-[10px] size-[7px] rotate-45 border-l border-t border-neutral-300 bg-[#efefef]" />
      </div>
      <button type="button" className="flex items-center gap-[7px] pl-[5px] pt-[2px] font-bold leading-[18px] text-[#c0442a]">
        <svg viewBox="0 0 6 6" className="size-[6px]" fill="#333">
          <path d="M6 0v6H0z" />
        </svg>
        填充
      </button>
      <div className="flex flex-col pl-[18px] pt-1">
        {fills.map(([label, key]) => (
          <label key={key} className="flex h-[19px] items-center gap-[3px]">
            <input
              type="radio"
              name="fill"
              value={key}
              checked={fill === key}
              onChange={() => setFill(key)}
              className="size-[10px] appearance-none rounded-full border border-neutral-300 bg-white checked:bg-[radial-gradient(circle,#444_30%,#fff_40%)]"
            />
            <span>
              {label}(<u>{key}</u>)
            </span>
          </label>
        ))}
      </div>
      <button type="button" className="flex items-center gap-[7px] pl-[5px] pt-1 font-bold leading-[18px]">
        <svg viewBox="0 0 6 8" className="h-[7px] w-[6px]" fill="none" stroke="#999">
          <path d="M1 1l4 3-4 3z" />
        </svg>
        线条
      </button>
    </aside>
  );
}

function StatusBar() {
  return (
    <footer className="flex h-[6px] shrink-0 items-end justify-between border-t border-neutral-200 bg-[#f8f8f8] pl-[52px] pr-[124px]">
      <div className="flex gap-4">
        <span className="h-px w-3 bg-neutral-500" />
        <span className="h-px w-1 bg-neutral-700" />
      </div>
      <div className="flex items-end gap-5">
        <span className="h-px w-2 bg-neutral-600" />
        <span className="flex h-[5px] w-7 items-end justify-center bg-neutral-200">
          <span className="h-px w-3 bg-neutral-500" />
        </span>
        <span className="h-px w-3 bg-neutral-500" />
        <span className="h-px w-3 bg-neutral-500" />
        <span className="h-px w-3 bg-neutral-600" />
      </div>
    </footer>
  );
}

export default function App() {
  return (
    <div className="relative flex h-screen flex-col overflow-hidden bg-[#efefef] font-['Open_Sans','Noto_Sans_CJK_SC',sans-serif] text-neutral-700">
      <TabBar />
      <Ribbon />
      <QuickBar />
      <div className="flex min-h-0 flex-1">
        <Thumbnails />
        <Canvas />
        <CanvasScroll />
        <DesignTools />
        <FormatPanel />
      </div>
      <StatusBar />
      <p className="absolute bottom-3 right-[18px] whitespace-nowrap font-['Liberation_Sans','Noto_Sans_CJK_SC',sans-serif] text-[28px] leading-9 text-white [text-shadow:2px_2px_0_#000]">
        头条 @大马力PPT
      </p>
    </div>
  );
}
